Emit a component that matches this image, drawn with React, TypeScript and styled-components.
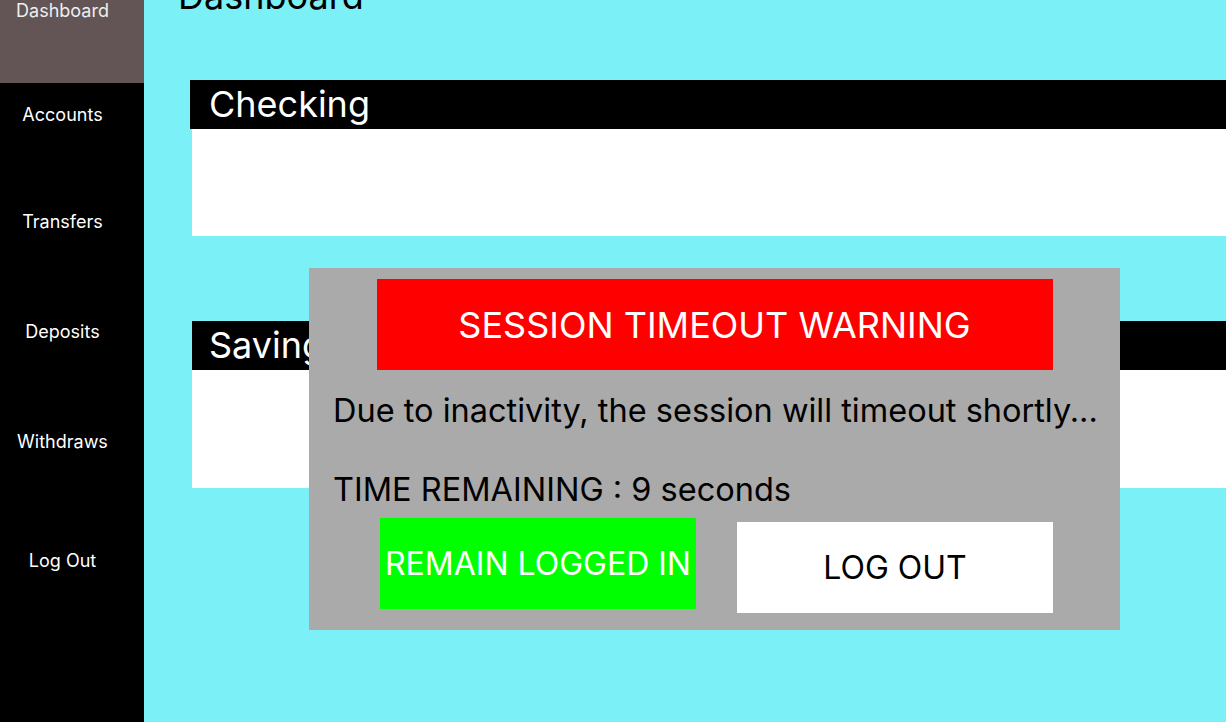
import React from 'react'
import styled, { createGlobalStyle } from 'styled-components';

const GlobalStyle = createGlobalStyle`
  html, body {
    margin: 0;
    padding: 0;
    overflow: hidden;
  }
  body {
    font-family: Inter, "Noto Sans", sans-serif;
  }
`

type NavEntry = {
  label: string,
  top: number
};

const navList: NavEntry[] = [
  { label: 'Accounts', top: 21 },
  { label: 'Transfers', top: 85 },
  { label: 'Deposits', top: 88 },
  { label: 'Withdraws', top: 88 },
  { label: 'Log Out', top: 97 },
];

const App: React.FC = () => {
  const secondsLeft = 9;

  return (
    <>
      <GlobalStyle />
      <Layout>
        <SideBar>
          <ActiveItem>Dashboard</ActiveItem>
          {
            navList.map((item) => {
              return <NavItem key={item.label} $top={item.top}>{item.label}</NavItem>;
            })
          }
        </SideBar>
        <Main>
          <Title>Dashboard</Title>
          <Card $shift={0} $top={62}>
            <CardHeader $shift={0}>Checking</CardHeader>
            <CardBody $height={107} $inset={2} />
          </Card>
          <Card $shift={2} $top={85}>
            <CardHeader $shift={2}>Savings</CardHeader>
            <CardBody $height={118} $inset={0} />
          </Card>
        </Main>
        <Modal>
          <WarningBanner>SESSION TIMEOUT WARNING</WarningBanner>
          <ModalText $gap={22}>Due to inactivity, the session will timeout shortly...</ModalText>
          <ModalText $gap={41}>TIME REMAINING : {secondsLeft} seconds</ModalText>
          <ButtonRow>
            <StayButton>REMAIN LOGGED IN</StayButton>
            <LogoutButton>LOG OUT</LogoutButton>
          </ButtonRow>
        </Modal>
      </Layout>
    </>
  )
}

const Layout = styled.div`
  position: relative;
  display: flex;
  width: 100vw;
  height: 100vh;
  overflow: hidden;
`

const SideBar = styled.nav`
  width: 144px;
  flex-shrink: 0;
  background-color: #000;
  display: flex;
  flex-direction: column;
`

const ActiveItem = styled.div`
  height: 83px;
  background-color: #635555;
  color: #eee;
  font-size: 18px;
  line-height: 22px;
  padding-right: 19px;
  text-align: center;
`

const NavItem = styled.div<{ $top: number }>`
  margin-top: ${props => props.$top}px;
  width: 125px;
  text-align: center;
  color: #fff;
  font-size: 18px;
  line-height: 22px;
`

const Main = styled.main`
  flex: 1;
  min-width: 0;
  background-color: #7cf0f7;
  padding-left: 34px;
`

const Title = styled.h1`
  margin: -26px 0 0;
  font-size: 36px;
  font-weight: 400;
  line-height: 44px;
  color: #000;
`

const Card = styled.section<{ $shift: number, $top: number }>`
  margin-top: ${props => props.$top}px;
  margin-left: ${props => 12 + props.$shift}px;
  width: 1100px;
`

const CardHeader = styled.div<{ $shift: number }>`
  height: 49px;
  background-color: #000;
  color: #fff;
  font-size: 36px;
  line-height: 49px;
  padding-left: ${props => 19 - props.$shift}px;
  box-sizing: border-box;
`

const CardBody = styled.div<{ $height: number, $inset: number }>`
  height: ${props => props.$height}px;
  margin-left: ${props => props.$inset}px;
  background-color: #fff;
`

const Modal = styled.div`
  position: absolute;
  left: 309px;
  top: 268px;
  width: 811px;
  height: 362px;
  box-sizing: border-box;
  background-color: #aaa;
  padding-top: 11px;
  display: flex;
  flex-direction: column;
`

const WarningBanner = styled.div`
  align-self: center;
  width: 676px;
  height: 91px;
  background-color: #f00;
  color: #fff;
  font-size: 36px;
  display: flex;
  align-items: center;
  justify-content: center;
`

const ModalText = styled.p<{ $gap: number }>`
  margin: ${props => props.$gap}px 0 0;
  padding-left: 24px;
  font-size: 32.5px;
  line-height: 38px;
  color: #000;
  white-space: nowrap;
`

const ButtonRow = styled.div`
  margin-top: 9px;
  padding: 0 67px 0 71px;
  display: flex;
  justify-content: space-between;
  align-items: flex-start;
`

const BaseButton = styled.button`
  width: 316px;
  height: 91px;
  border: none;
  padding: 0;
  font-family: Inter, "Noto Sans", sans-serif;
  font-size: 32px;
  display: flex;
  align-items: center;
  justify-content: center;
  white-space: nowrap;
`

const StayButton = styled(BaseButton)`
  background-color: #0f0;
  color: #fff;
`

const LogoutButton = styled(BaseButton)`
  margin-top: 4px;
  background-color: #fff;
  color: #000;
`

export default App;
